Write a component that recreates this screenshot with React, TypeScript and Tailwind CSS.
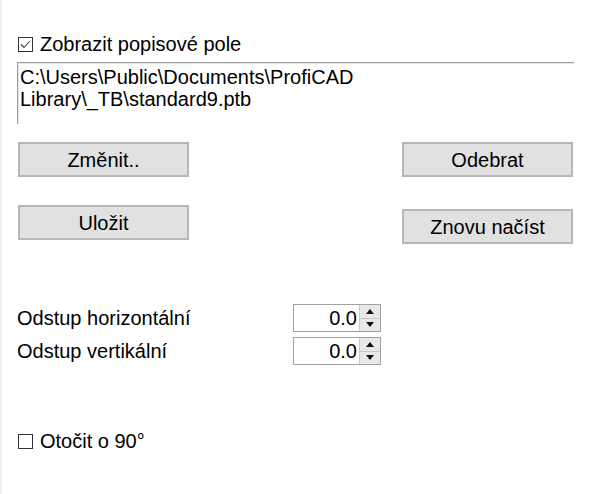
import React from "react";

function CheckBox({ checked }: { checked?: boolean }) {
  return (
    <div className="w-[15px] h-[15px] border border-[#333333] bg-white flex items-center justify-center shrink-0">
      {checked && (
        <svg width="13" height="13" viewBox="0 0 13 13">
          <polyline points="2,6.5 5,9.5 11,3" fill="none" stroke="#3c3c3c" strokeWidth="1.1" />
        </svg>
      )}
    </div>
  );
}

function Btn({ label, className = "" }: { label: string; className?: string }) {
  return (
    <div
      className={
        "w-[171px] h-[35px] bg-[#e1e1e1] border-2 border-[#b7b7b7] flex items-center justify-center text-[20px] leading-[22px] text-black " +
        className
      }
    >
      {label}
    </div>
  );
}

function Spin({ value }: { value: string }) {
  return (
    <div className="w-[88px] h-[28px] border border-[#a0a0a0] bg-white flex">
      <div className="flex-1 flex items-center justify-end pr-[2px] text-[20px] leading-[22px]">{value}</div>
      <div className="w-[21px] flex flex-col border-l border-[#c8c8c8]">
        <div className="flex-1 bg-[#e8e8e8] border-b border-[#c8c8c8] flex items-center justify-center">
          <svg width="8" height="5" viewBox="0 0 8 5">
            <polygon points="0,5 8,5 4,0" fill="#111" />
          </svg>
        </div>
        <div className="flex-1 bg-[#e8e8e8] flex items-center justify-center">
          <svg width="8" height="5" viewBox="0 0 8 5">
            <polygon points="0,0 8,0 4,5" fill="#111" />
          </svg>
        </div>
      </div>
    </div>
  );
}

export default function App() {
  return (
    <div
      className="w-[614px] h-[494px] bg-white border-l-2 border-[#f0f0f0] pl-[15px] pt-[33px] text-black overflow-hidden"
      style={{ fontFamily: '"Liberation Sans", Arial, sans-serif' }}
    >
      <div className="flex items-center h-[22px] text-[20px] leading-[22px]">
        <div className="ml-px">
          <CheckBox checked />
        </div>
        <span className="ml-[7px]">Zobrazit popisové pole</span>
      </div>

      <div className="mt-[7px] w-[557px] h-[62px] border-t border-l border-[#a0a0a0] shadow-[inset_1px_1px_0_#e3e3e3] pl-[2px] pt-[3px] text-[20px] leading-[22px]">
        <div>C:\Users\Public\Documents\ProfiCAD</div>
        <div>Library\_TB\standard9.ptb</div>
      </div>

      <div className="mt-[18px] ml-px w-[555px] flex justify-between">
        <Btn label="Změnit.." />
        <Btn label="Odebrat" />
      </div>

      <div className="mt-[28px] ml-px w-[555px] flex justify-between items-start">
        <Btn label="Uložit" />
        <Btn label="Znovu načíst" className="mt-[4px]" />
      </div>

      <div className="mt-[60px] flex items-center text-[20px] leading-[22px]">
        <div className="w-[276px]">Odstup horizontální</div>
        <Spin value="0.0" />
      </div>
      <div className="mt-[5px] flex items-center text-[20px] leading-[22px]">
        <div className="w-[276px]">Odstup vertikální</div>
        <Spin value="0.0" />
      </div>

      <div className="mt-[65px] flex items-center h-[22px] text-[20px] leading-[22px]">
        <div className="ml-px">
          <CheckBox />
        </div>
        <span className="ml-[7px]">Otočit o 90°</span>
      </div>
    </div>
  );
}
